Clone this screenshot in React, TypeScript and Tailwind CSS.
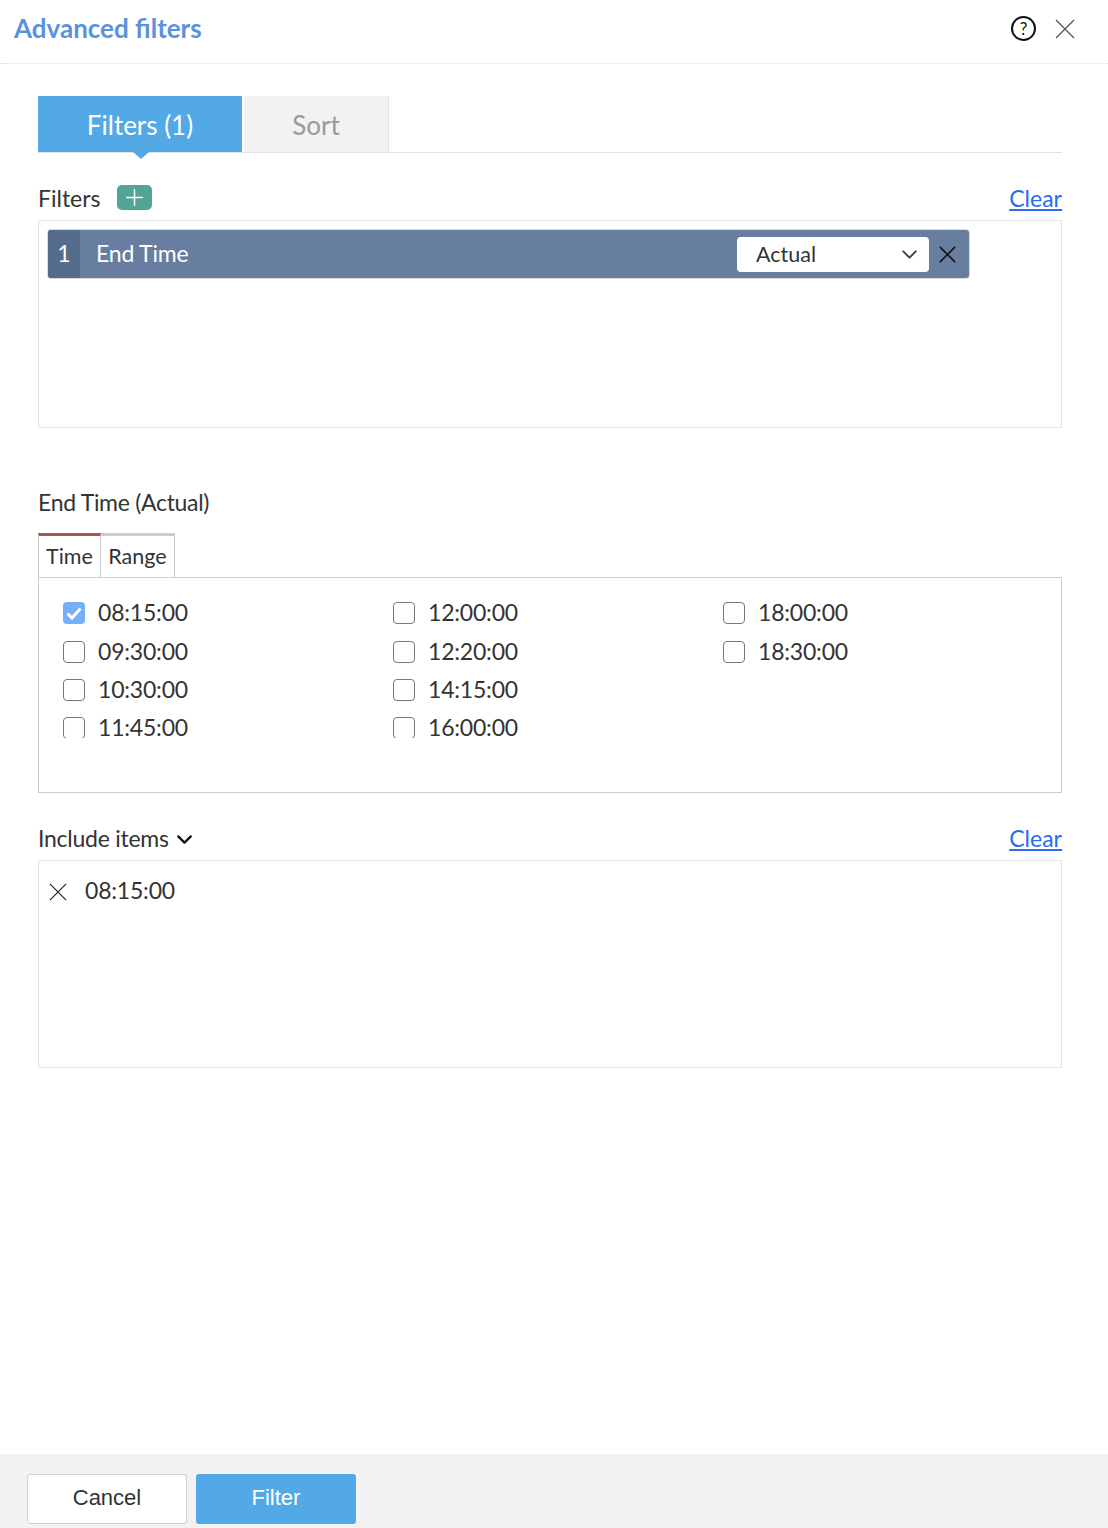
import React from "react";
import { Plus, ChevronDown } from "lucide-react";

const columns = [
  ["08:15:00", "09:30:00", "10:30:00", "11:45:00"],
  ["12:00:00", "12:20:00", "14:15:00", "16:00:00"],
  ["18:00:00", "18:30:00"],
];

const Cross = ({ className, width = 1.3 }: { className: string; width?: number }) => (
  <svg viewBox="0 0 20 20" className={className} fill="none" stroke="currentColor" strokeWidth={width}>
    <path d="M1 1 L19 19 M19 1 L1 19" />
  </svg>
);

const TimeOption = ({ label }: { label: string }) => {
  const checked = label === "08:15:00";
  return (
    <div className="flex h-[38.4px] items-center">
      {checked ? (
        <span className="flex h-[22px] w-[22px] items-center justify-center rounded-[4px] bg-[#74aff8]">
          <svg viewBox="0 0 22 22" className="h-[22px] w-[22px]" fill="none" stroke="#fff" strokeWidth="3">
            <path d="M4.5 11.5 L9 16 L17.5 6.5" />
          </svg>
        </span>
      ) : (
        <span className="h-[22px] w-[22px] shrink-0 rounded-[4px] border border-[#777]" />
      )}
      <span className="mb-[2px] ml-[13px] text-[23px] leading-[20px] text-[#333] tracking-[-0.2px]">{label}</span>
    </div>
  );
};

export default function App() {
  return (
    <div className="flex h-[1528px] flex-col overflow-hidden bg-white font-['Lato','Open_Sans',sans-serif] text-[#333]">
      <header className="flex h-[64px] shrink-0 items-center justify-between border-b border-dotted border-[#ddd] pb-[6px] pl-[14px] pr-[33px]">
        <h1 className="text-[26px] font-bold text-[#5a92dc]">Advanced filters</h1>
        <div className="flex items-center gap-[19px]">
          <span className="flex h-[25px] w-[25px] items-center justify-center rounded-full border-2 border-[#111] text-[17px] leading-none text-[#111]">?</span>
          <Cross className="h-[20px] w-[20px] text-[#555]" />
        </div>
      </header>

      <main className="flex-1 px-[38px] pr-[46px]">
        <div className="mt-[32px] flex h-[57px] border-b border-[#e2e2e2]">
          <div className="relative flex w-[204px] items-center justify-center bg-[#52a9e6] pt-[2px] text-[26px] text-white">
            Filters (1)
            <span className="absolute bottom-[-7px] left-[95px] h-0 w-0 border-x-[8px] border-t-[7px] border-x-transparent border-t-[#52a9e6]" />
          </div>
          <div className="ml-[2px] flex w-[145px] items-center justify-center border-r border-[#e2e2e2] bg-[#f2f2f2] pt-[2px] text-[26px] text-[#999]">Sort</div>
        </div>

        <div className="mt-[31px] flex h-[36px] items-start justify-between">
          <div className="flex items-start">
            <span className="text-[23px] leading-[28px]">Filters</span>
            <span className="ml-[16px] mt-[1px] flex h-[25px] w-[35px] items-center justify-center rounded-[5px] bg-[#52a596]">
              <Plus className="h-[27px] w-[27px] shrink-0 text-white" strokeWidth={1.3} />
            </span>
          </div>
          <a className="text-[23px] leading-[28px] text-[#2a6cf0] underline">Clear</a>
        </div>
        <div className="h-[208px] border border-[#e2e2e2] pl-[8px] pt-[8px]">
          <div className="flex h-[50px] w-[923px] items-center overflow-hidden rounded-[4px] border border-[#d8dde5] bg-[#677ea0] text-white">
            <span className="flex h-full w-[32px] items-center justify-center bg-[#566c8c] pb-[1px] text-[23px]">1</span>
            <span className="ml-[16px] flex-1 pb-[1px] text-[23px] tracking-[-0.2px]">End Time</span>
            <div className="flex h-[35px] w-[192px] items-center justify-between rounded-[4px] bg-white pl-[19px] pr-[7px] text-[21.5px] text-[#333]">
              Actual
              <ChevronDown className="h-[25px] w-[25px] text-[#444]" strokeWidth={1.9} />
            </div>
            <Cross className="ml-[10px] mr-[13px] h-[17px] w-[17px] text-[#111]" width={1.8} />
          </div>
        </div>

        <h2 className="mt-[59px] text-[23px] font-normal leading-[30px] tracking-[-0.3px]">End Time (Actual)</h2>
        <div className="mt-[16px] flex h-[44px]">
          <div className="flex w-[63px] items-center justify-center border-x border-t-[3px] border-x-[#ccc] border-t-[#a4584e] text-[21.5px]">Time</div>
          <div className="flex w-[74px] items-center justify-center border-r border-t-[3px] border-r-[#ccc] border-t-[#ccc] text-[21.5px]">Range</div>
        </div>
        <div className="h-[216px] border border-[#ccc] pl-[24px] pt-[16px]">
          <div className="flex h-[144px] overflow-hidden">
            {columns.map((col, i) => (
              <div key={i} className="w-[330px]">
                {col.map((t) => (
                  <TimeOption key={t} label={t} />
                ))}
              </div>
            ))}
          </div>
        </div>

        <div className="mt-[30px] flex h-[37px] items-start justify-between">
          <div className="flex items-center">
            <span className="text-[23px] leading-[30px] tracking-[-0.25px]">Include items</span>
            <ChevronDown className="ml-[3px] mt-[3px] h-[25px] w-[25px] text-[#111]" strokeWidth={2.2} />
          </div>
          <a className="text-[23px] leading-[30px] text-[#2a6cf0] underline">Clear</a>
        </div>
        <div className="flex h-[208px] items-start border border-[#e2e2e2] pl-[10px] pt-[15px]">
          <Cross className="mt-[7px] h-[18px] w-[18px] text-[#222]" />
          <span className="ml-[18px] text-[23px] leading-[28px] tracking-[-0.2px]">08:15:00</span>
        </div>
      </main>

      <footer className="flex h-[74px] shrink-0 items-start gap-[9px] bg-[#f2f2f2] pl-[27px] pt-[20px] font-['Liberation_Sans',sans-serif] text-[22px]">
        <button className="h-[50px] w-[160px] rounded-[3px] border border-[#d0d0d0] bg-white pb-[3px] text-[#333]">Cancel</button>
        <button className="h-[50px] w-[160px] rounded-[3px] bg-[#52a9e6] pb-[3px] text-white">Filter</button>
      </footer>
    </div>
  );
}
